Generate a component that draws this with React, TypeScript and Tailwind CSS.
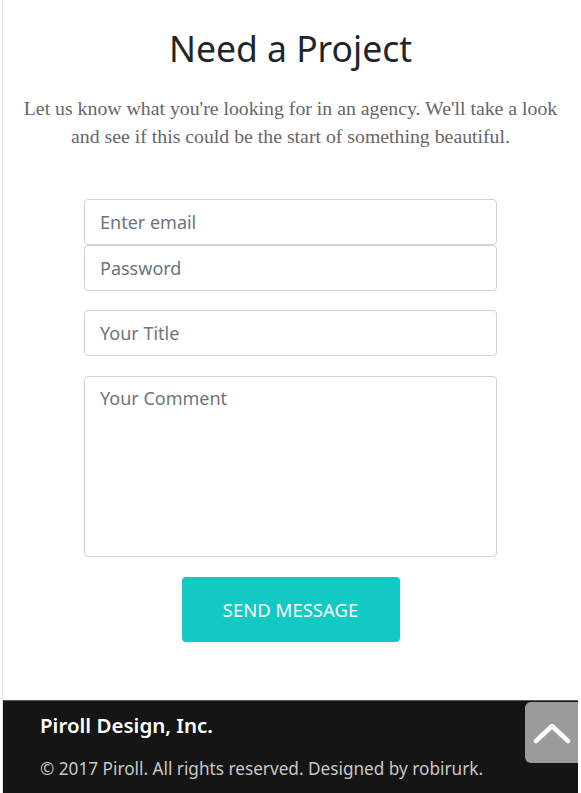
import React from "react";

export default function App() {
  const sans = { fontFamily: '"Noto Sans", "Open Sans", sans-serif' };
  return (
    <div className="w-[581px] h-[793px] bg-white overflow-hidden flex" style={sans}>
      <div className="w-[2px] shrink-0 bg-white" />
      <div className="w-[1px] shrink-0 bg-[#e3e3e3]" />
      <div className="w-[575px] shrink-0 flex flex-col">
        <div className="h-[700px] shrink-0 flex flex-col items-center">
          <h1 className="mt-[26px] text-[35.5px] leading-[44px] text-[#212529]">Need a Project</h1>
          <p
            className="mt-[24px] w-[545px] text-center text-[19.8px] leading-[28px] text-[#666666]"
            style={{ fontFamily: '"Liberation Serif", "Times New Roman", serif' }}
          >
            Let us know what you're looking for in an agency. We'll take a look and see if this could be the start of something beautiful.
          </p>
          <form className="mt-[49px] w-[413px] flex flex-col" onSubmit={(e) => e.preventDefault()}>
            <input
              placeholder="Enter email"
              className="h-[46px] border border-[#ced4da] rounded-[4px] px-[15px] text-[18px] placeholder:text-[#6c757d] outline-none"
            />
            <input
              placeholder="Password"
              className="h-[46px] border border-[#ced4da] rounded-[4px] px-[15px] text-[18px] placeholder:text-[#6c757d] outline-none"
            />
            <input
              placeholder="Your Title"
              className="mt-[19px] h-[46px] border border-[#ced4da] rounded-[4px] px-[15px] text-[18px] placeholder:text-[#6c757d] outline-none"
            />
            <textarea
              placeholder="Your Comment"
              className="mt-[20px] h-[181px] border border-[#ced4da] rounded-[4px] px-[15px] py-[8px] text-[18px] leading-[27px] placeholder:text-[#6c757d] outline-none resize-none"
            />
            <div className="mt-[20px] flex justify-center">
              <button className="w-[218px] h-[65px] rounded-[4px] bg-[#12c9c3] text-white text-[18.5px]">
                SEND MESSAGE
              </button>
            </div>
          </form>
        </div>
        <footer className="relative flex-1 bg-[#151515] border-t border-[#5a5a5a] pl-[37px] pt-[9px]">
          <div className="text-white text-[20.5px] font-semibold leading-[30px]">Piroll Design, Inc.</div>
          <div className="mt-[16px] text-[#c8c8c8] text-[17.2px] leading-[26px]">
            © 2017 Piroll. All rights reserved. Designed by robirurk.
          </div>
          <div className="absolute right-0 top-[1px] w-[53px] h-[61px] bg-[#9b9b9b] rounded-l-[6px] flex items-center justify-center">
            <svg width="40" height="24" viewBox="0 0 40 24" fill="none">
              <path d="M4 20 L20 5 L36 20" stroke="white" strokeWidth="4.5" strokeLinecap="round" strokeLinejoin="round" />
            </svg>
          </div>
        </footer>
      </div>
      <div className="flex-1 bg-white" />
    </div>
  );
}
